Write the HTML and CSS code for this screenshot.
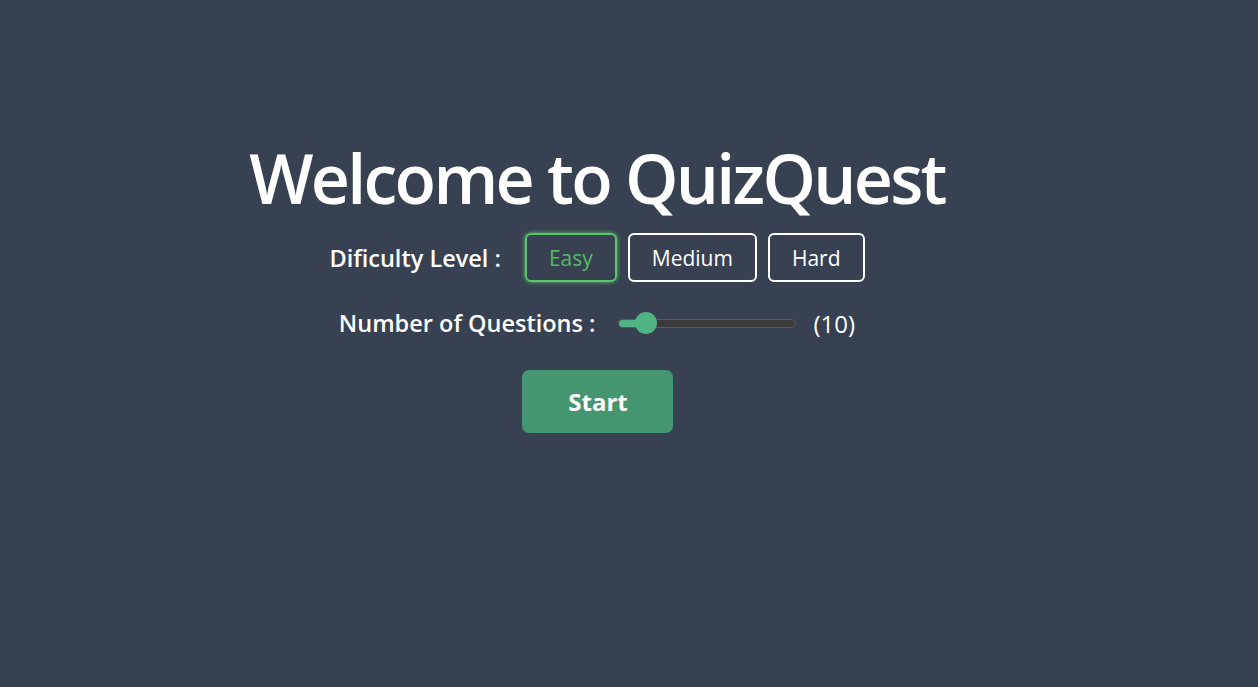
FILE: index.html
```html
<!DOCTYPE html>
<html lang="en">
<head>
<meta charset="utf-8">
<title>QuizQuest</title>
<link rel="stylesheet" href="styles.css">
</head>
<body>
<main class="page">
  <section class="welcome">
    <h1 class="title">Welcome to QuizQuest</h1>
    <div class="row difficulty">
      <span class="label">Dificulty Level :</span>
      <div class="levels">
        <button class="level active">Easy</button>
        <button class="level">Medium</button>
        <button class="level">Hard</button>
      </div>
    </div>
    <div class="row count">
      <span class="label">Number of Questions :</span>
      <div class="slider">
        <div class="track"><div class="fill" style="width: 27px"></div></div>
        <div class="thumb" style="left: 17px"></div>
      </div>
      <span class="value">(10)</span>
    </div>
    <button class="start">Start</button>
  </section>
</main>
</body>
</html>
```

FILE: styles.css
```css
html, body {
  margin: 0;
  padding: 0;
}
body {
  background: #374151;
  color: #ffffff;
  font-family: "Open Sans", "Noto Sans", sans-serif;
  min-height: 687px;
}
.page {
  display: flex;
  justify-content: center;
  padding-right: 64px;
}
.welcome {
  display: flex;
  flex-direction: column;
  align-items: center;
  padding-top: 132px;
}
.title {
  margin: 0;
  font-size: 68px;
  font-weight: 600;
  line-height: 92px;
  letter-spacing: -2.7px;
}
.row {
  display: flex;
  align-items: center;
}
.label {
  font-size: 23.5px;
  font-weight: 600;
  letter-spacing: 0;
}
.difficulty {
  margin-top: 9px;
  gap: 24px;
}
.levels {
  display: flex;
  gap: 11px;
}
.level {
  height: 49px;
  padding: 0 22px;
  background: transparent;
  border: 2px solid #ffffff;
  border-radius: 6px;
  color: #ffffff;
  font-family: inherit;
  font-size: 21px;
}
.level.active {
  border-color: #5cc46c;
  color: #58b868;
  box-shadow: 0 0 4px #5cc46c;
}
.count {
  margin-top: 16px;
  height: 50px;
}
.slider {
  position: relative;
  width: 178px;
  height: 22px;
  margin: 0 18px 0 22px;
  display: flex;
  align-items: center;
}
.track {
  width: 100%;
  height: 9px;
  border-radius: 5px;
  background: #3b3b3b;
  border: 1px solid #5a5a5a;
  box-sizing: border-box;
  overflow: hidden;
}
.fill {
  height: 100%;
  background: #4fb383;
}
.thumb {
  position: absolute;
  top: 0;
  width: 22px;
  height: 22px;
  border-radius: 50%;
  background: #4fb383;
}
.value {
  font-size: 24px;
}
.start {
  margin-top: 22px;
  margin-left: 2px;
  width: 151px;
  height: 63px;
  background: #459670;
  border: none;
  border-radius: 7px;
  color: #ffffff;
  font-family: inherit;
  font-size: 24px;
  font-weight: 700;
}
```
